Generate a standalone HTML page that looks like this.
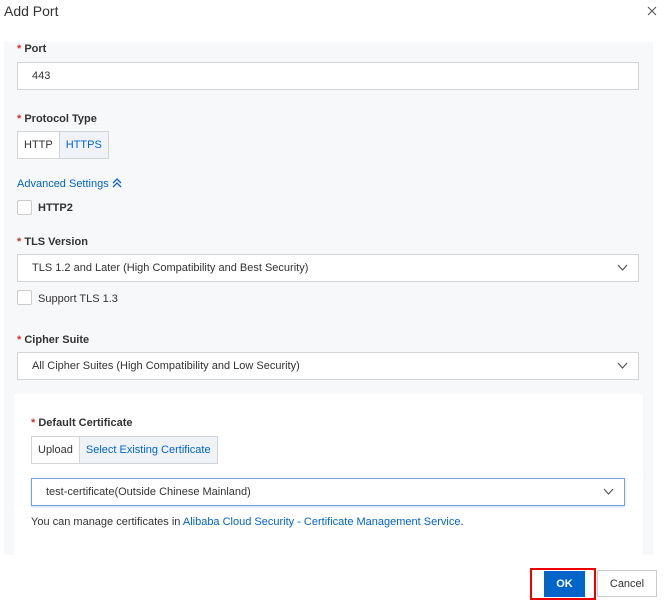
<!DOCTYPE html><html><head><style>
body{margin:0;width:664px;height:603px;background:#fff;font-family:"Liberation Sans",sans-serif;color:#333;position:relative;overflow:hidden;font-size:11px}
.a{position:absolute}
.panel{left:4px;top:42px;width:649px;height:513px;background:#f7f8fa}
.lbl{font-weight:bold;font-size:11px;color:#333}
.lbl:before{content:"* ";color:#d93026}
.inp{background:#fff;border:1px solid #d4d4d4;box-sizing:border-box;height:28px;line-height:27px;padding-left:14px;font-size:11px}
.seg{display:flex;border:1px solid #d4d4d4;height:28px;box-sizing:border-box;line-height:27px;font-size:11px}
.seg span{padding:0 6px;background:#fff}
.seg span.on{background:#eff3f8;color:#0064c8;border-left:1px solid #d4d4d4}
.cb{width:13px;height:13px;border:1px solid #ccc;background:#fff;border-radius:2px}
.chev{position:absolute;right:10px;top:9px}
.blue{color:#0064c8}
</style></head><body>
<div class="a" style="left:4px;top:3px;font-size:14px;color:#333">Add Port</div>
<svg class="a" style="left:647px;top:6px" width="10" height="10"><path d="M1 1L9 9M9 1L1 9" stroke="#555" stroke-width="1.1"/></svg>
<div class="a panel"></div>
<div class="a lbl" style="left:17px;top:43px">Port</div>
<div class="a inp" style="left:17px;top:62px;width:622px">443</div>
<div class="a lbl" style="left:17px;top:113px">Protocol Type</div>
<div class="a seg" style="left:17px;top:131px"><span>HTTP</span><span class="on">HTTPS</span></div>
<div class="a blue" style="left:17px;top:178px">Advanced Settings <svg width="10" height="10" style="vertical-align:-1px"><path d="M1 5L5 1L9 5M1 9L5 5L9 9" fill="none" stroke="#0064c8" stroke-width="1.3"/></svg></div>
<div class="a cb" style="left:17px;top:200px"></div>
<div class="a" style="left:38px;top:202px;font-weight:bold">HTTP2</div>
<div class="a lbl" style="left:17px;top:236px">TLS Version</div>
<div class="a inp" style="left:17px;top:254px;width:622px">TLS 1.2 and Later (High Compatibility and Best Security)<svg class="chev" width="11" height="8"><path d="M1 1L5.5 6L10 1" fill="none" stroke="#555" stroke-width="1.2"/></svg></div>
<div class="a cb" style="left:17px;top:290px"></div>
<div class="a" style="left:38px;top:293px">Support TLS 1.3</div>
<div class="a lbl" style="left:17px;top:334px">Cipher Suite</div>
<div class="a inp" style="left:17px;top:352px;width:622px">All Cipher Suites (High Compatibility and Low Security)<svg class="chev" width="11" height="8"><path d="M1 1L5.5 6L10 1" fill="none" stroke="#555" stroke-width="1.2"/></svg></div>
<div class="a" style="left:14px;top:394px;width:629px;height:161px;background:#fff"></div>
<div class="a lbl" style="left:31px;top:417px">Default Certificate</div>
<div class="a seg" style="left:31px;top:436px"><span>Upload</span><span class="on">Select Existing Certificate</span></div>
<div class="a inp" style="left:31px;top:478px;width:594px;border-color:#7a9fd6;box-shadow:0 1px 2px rgba(0,100,200,.25)">test-certificate(Outside Chinese Mainland)<svg class="chev" width="11" height="8"><path d="M1 1L5.5 6L10 1" fill="none" stroke="#555" stroke-width="1.2"/></svg></div>
<div class="a" style="left:31px;top:516px">You can manage certificates in <span class="blue">Alibaba Cloud Security - Certificate Management Service</span>.</div>
<div class="a" style="left:530px;top:568px;width:66px;height:32px;border:2px solid #e00;box-sizing:border-box"></div>
<div class="a" style="left:544px;top:571px;width:41px;height:26px;background:#0064c8;color:#fff;font-weight:bold;text-align:center;line-height:26px">OK</div>
<div class="a" style="left:597px;top:570px;width:60px;height:27px;border:1px solid #ccc;box-sizing:border-box;text-align:center;line-height:26px">Cancel</div>
</body></html>
